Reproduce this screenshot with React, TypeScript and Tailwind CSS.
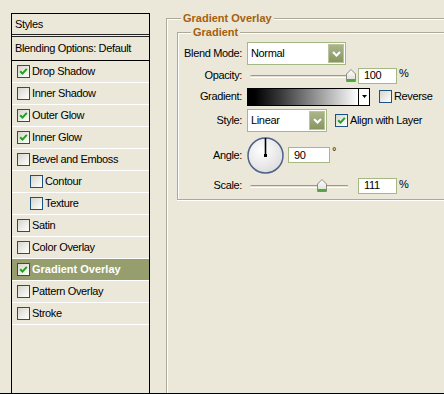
import React from "react";

type Effect = {
  label: string;
  checked?: boolean;
  indent?: boolean;
  selected?: boolean;
};

const effects: Effect[] = [
  { label: "Drop Shadow", checked: true },
  { label: "Inner Shadow" },
  { label: "Outer Glow", checked: true },
  { label: "Inner Glow", checked: true },
  { label: "Bevel and Emboss" },
  { label: "Contour", indent: true },
  { label: "Texture", indent: true },
  { label: "Satin" },
  { label: "Color Overlay" },
  { label: "Gradient Overlay", checked: true, selected: true },
  { label: "Pattern Overlay" },
  { label: "Stroke" },
];

const Checkbox: React.FC<{ checked?: boolean }> = ({ checked }) => (
  <span className="flex h-[13px] w-[13px] shrink-0 items-center justify-center border border-[#1c5180] bg-[linear-gradient(135deg,#d6d5cc,#ffffff)]">
    {checked && (
      <svg width="9" height="9" viewBox="0 0 9 9">
        <path d="M1.2 4.2 L3.5 6.6 L7.8 1.8" stroke="#21a121" strokeWidth="2" fill="none" />
      </svg>
    )}
  </span>
);

const DropButton: React.FC = () => (
  <span className="flex h-[19px] w-[16px] items-center justify-center border border-[#b9c39c] bg-[linear-gradient(#aab68a,#899661)]">
    <svg width="9" height="6" viewBox="0 0 9 6">
      <path d="M1 1 L4.5 4.5 L8 1" stroke="#fff" strokeWidth="2" fill="none" />
    </svg>
  </span>
);

const Select: React.FC<{ value: string; width: string }> = ({ value, width }) => (
  <div className={`flex h-[23px] items-center justify-between border border-[#a6b985] bg-white pl-[3px] pr-[1px] ${width}`}>
    <span>{value}</span>
    <DropButton />
  </div>
);

const Field: React.FC<{ value: string; width: string }> = ({ value, width }) => (
  <div className={`flex h-[16px] items-center border border-[#a6b985] bg-white pl-[5px] ${width}`}>
    {value}
  </div>
);

const Thumb: React.FC = () => (
  <svg width="10" height="13" viewBox="0 0 10 13">
    <defs>
      <linearGradient id="thumbFill" x1="0" y1="0" x2="0" y2="1">
        <stop offset="0" stopColor="#ffffff" />
        <stop offset="1" stopColor="#dcdcd4" />
      </linearGradient>
    </defs>
    <path d="M0.5 5 L5 0.5 L9.5 5 V12.5 H0.5 Z" fill="url(#thumbFill)" stroke="#8a8a84" />
    <rect x="1" y="10" width="8" height="2.5" fill="#4fa83a" />
  </svg>
);

const Slider: React.FC<{ thumbLeft: string }> = ({ thumbLeft }) => (
  <div className="relative h-[14px] w-[107px]">
    <div className="absolute left-[3px] top-[6px] h-[3px] w-[98px] rounded-l-[2px] border-t border-b border-t-[#9a9a92] border-b-white bg-[#e2e0d4]" />
    <div className={`absolute top-0 ${thumbLeft}`}>
      <Thumb />
    </div>
  </div>
);

const Row: React.FC<{ label: string; height: string; children: React.ReactNode }> = ({
  label,
  height,
  children,
}) => (
  <div className={`flex items-center ${height}`}>
    <span className="w-[64px] text-right">{label}</span>
    <div className="ml-[5px] flex items-center">{children}</div>
  </div>
);

export default function App() {
  return (
    <div className="flex h-[394px] w-[444px] overflow-hidden border-b border-black bg-[#ebe8da] font-['Liberation_Sans',Arial,sans-serif] text-[11px] leading-[13px] tracking-[-0.35px] text-black">
      {/* styles list */}
      <div className="ml-[11px] mt-[13px] flex w-[139px] shrink-0 flex-col border-x border-t border-black">
        <div className="flex h-[20px] items-center pl-[3px]">Styles</div>
        <div className="h-[3px] border-y border-[#222] bg-[#f1efe6]" />
        <div className="flex h-[24px] items-center border-b border-black pl-[3px]">
          Blending Options: Default
        </div>
        {effects.map((e) => (
          <div
            key={e.label}
            className={`flex h-[22px] items-center gap-[2px] border-b border-white ${
              e.indent ? "pl-[18px]" : "pl-[5px]"
            } ${e.selected ? "bg-[#969e6e] font-bold text-white tracking-[0px]" : ""}`}
          >
            <Checkbox checked={e.checked} />
            <span>{e.label}</span>
          </div>
        ))}
      </div>

      {/* Gradient Overlay group */}
      <div className="ml-[16px] mt-[18px] flex min-w-[300px] flex-col border-l border-t border-[#aca999] shadow-[inset_1px_1px_0_#fff]">
        <span className="-mt-[7px] ml-[14px] self-start bg-[#ebe8da] px-[2px] font-bold tracking-[0px] text-[#a55f10]">
          Gradient Overlay
        </span>

        <div className="ml-[10px] mt-[7px] flex flex-col border-y border-l border-[#aca999] pb-[4px] shadow-[inset_1px_1px_0_#fff,0_1px_0_#fff]">
          <span className="-mt-[7px] ml-[13px] self-start bg-[#ebe8da] px-[2px] font-bold tracking-[0px] text-[#a55f10]">
            Gradient
          </span>

          <div className="mt-[3px]">
            <Row label="Blend Mode:" height="h-[23px]">
              <Select value="Normal" width="w-[99px]" />
            </Row>

            <Row label="Opacity:" height="h-[21px]">
              <Slider thumbLeft="left-[99px]" />
              <div className="ml-[4px] flex items-start">
                <Field value="100" width="w-[39px]" />
                <span className="-mt-px ml-[2px]">%</span>
              </div>
            </Row>

            <Row label="Gradient:" height="h-[21px]">
              <div className="flex h-[18px] w-[123px] border border-black">
                <div className="flex-1 bg-[linear-gradient(to_right,#000_6%,#3a3a3a_30%,#fff_100%)]" />
                <div className="flex w-[11px] items-center justify-center border-l border-black bg-white">
                  <svg width="5" height="3" viewBox="0 0 5 3">
                    <path d="M0 0 H5 L2.5 3 Z" fill="#000" />
                  </svg>
                </div>
              </div>
              <div className="ml-[9px] flex items-center gap-[2px]">
                <Checkbox />
                <span>Reverse</span>
              </div>
            </Row>

            <Row label="Style:" height="h-[27px]">
              <Select value="Linear" width="w-[80px]" />
              <div className="ml-[8px] flex items-center gap-[2px]">
                <Checkbox checked />
                <span>Align with Layer</span>
              </div>
            </Row>

            <Row label="Angle:" height="h-[42px]">
              <svg width="37" height="37" viewBox="0 0 37 37">
                <defs>
                  <radialGradient id="dialFill" cx="0.4" cy="0.35" r="0.7">
                    <stop offset="0" stopColor="#ffffff" />
                    <stop offset="1" stopColor="#dcdcdc" />
                  </radialGradient>
                </defs>
                <circle cx="18.5" cy="18.5" r="17.5" fill="url(#dialFill)" stroke="#4e6189" strokeWidth="1.5" />
                <line x1="18.5" y1="18.5" x2="18.5" y2="1" stroke="#000" strokeWidth="1.6" />
                <rect x="17" y="17" width="3" height="3" fill="#000" />
              </svg>
              <div className="ml-[4px] flex items-start">
                <Field value="90" width="w-[42px]" />
                <span className="-mt-[2px] ml-[2px]">°</span>
              </div>
            </Row>

            <Row label="Scale:" height="h-[19px]">
              <Slider thumbLeft="left-[70px]" />
              <div className="ml-[4px] flex items-start">
                <Field value="111" width="w-[39px]" />
                <span className="ml-[2px]">%</span>
              </div>
            </Row>
          </div>
        </div>
      </div>
    </div>
  );
}
